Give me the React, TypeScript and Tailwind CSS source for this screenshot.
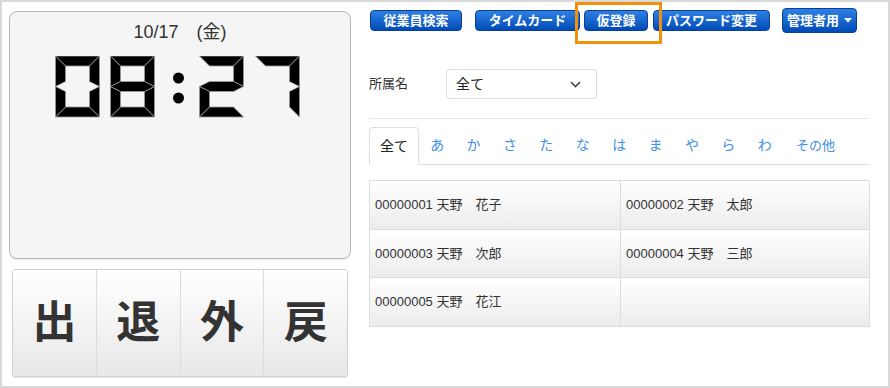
import React from 'react';

const FONT = { fontFamily: '"Liberation Sans", "Noto Sans CJK JP", sans-serif' };

// seven segment digit, W x H box
const W = 44;
const H = 61;
const T = 10;
const M = H / 2;

const SEGMENTS: Record<string, string> = {
  a: `0,0 ${W},0 ${W - T},${T} ${T},${T}`,
  b: `${W},0 ${W},${M} ${W - T},${M - T / 2} ${W - T},${T}`,
  c: `${W},${M} ${W},${H} ${W - T},${H - T} ${W - T},${M + T / 2}`,
  d: `0,${H} ${T},${H - T} ${W - T},${H - T} ${W},${H}`,
  e: `0,${M} ${T},${M + T / 2} ${T},${H - T} 0,${H}`,
  f: `0,0 ${T},${T} ${T},${M - T / 2} 0,${M}`,
  g: `0,${M} ${T},${M - T / 2} ${W - T},${M - T / 2} ${W},${M} ${W - T},${M + T / 2} ${T},${M + T / 2}`,
};

const DIGITS: Record<string, string> = {
  '0': 'abcdef',
  '2': 'abged',
  '7': 'abc',
  '8': 'abcdefg',
};

function Digit({ value, x }: { value: string; x: number }) {
  return (
    <g transform={`translate(${x} 0)`}>
      {DIGITS[value].split('').map((s) => (
        <polygon key={s} points={SEGMENTS[s]} fill="#000" stroke="#9a9a9a" strokeWidth={0.8} />
      ))}
    </g>
  );
}

function Clock() {
  return (
    <div className="w-[342px] h-[248px] rounded-lg border border-[#b8b8b8] bg-[#f5f5f5] flex flex-col items-center shadow-[0_1px_1px_rgba(0,0,0,0.08)]">
      <div className="mt-[9px] text-[18px] leading-[22px] text-[#333]">10/17　(金)</div>
      <svg width={246} height={62} viewBox="0 0 246 62" className="mt-[13px] ml-[-4px]">
        <Digit value="0" x={0.5} />
        <Digit value="8" x={55.5} />
        <circle cx={123.5} cy={22} r={5.5} fill="#000" />
        <circle cx={123.5} cy={42} r={5.5} fill="#000" />
        <Digit value="2" x={144.5} />
        <Digit value="7" x={200.5} />
      </svg>
    </div>
  );
}

const punch = ['出', '退', '外', '戻'];

function PunchButtons() {
  return (
    <div className="mt-[10px] mx-[3px] flex h-[108px] rounded-[3px] border border-[#d0d0d0] shadow-[0_1px_1px_rgba(0,0,0,0.1)] overflow-hidden">
      {punch.map((p, i) => (
        <div
          key={p}
          className={`flex-1 flex items-center justify-center bg-linear-to-b from-white to-[#e8e8e8] text-[44px] font-bold text-[#333] ${i > 0 ? 'border-l border-[#dcdcdc]' : ''}`}
        >
          {p}
        </div>
      ))}
    </div>
  );
}

const navButtons = [
  { label: '従業員検索', w: 'w-[92px]', ml: '' },
  { label: 'タイムカード', w: 'w-[105px]', ml: 'ml-[13px]' },
  { label: '仮登録', w: 'w-[64px]', ml: 'ml-[4px]' },
  { label: 'パスワード変更', w: 'w-[117px]', ml: 'ml-[5px]' },
];

const kana = ['あ', 'か', 'さ', 'た', 'な', 'は', 'ま', 'や', 'ら', 'わ'];

const employees = [
  '00000001 天野　花子',
  '00000002 天野　太郎',
  '00000003 天野　次郎',
  '00000004 天野　三郎',
  '00000005 天野　花江',
  '',
];

export default function App() {
  return (
    <div
      className="relative w-[890px] h-[388px] box-border border-2 border-[#d9d9d9] bg-white flex overflow-hidden"
      style={FONT}
    >
      {/* left: clock and punch buttons */}
      <div className="pl-[7px] pt-[9px] flex flex-col">
        <Clock />
        <PunchButtons />
      </div>

      {/* right: nav, filter, tabs, list */}
      <div className="ml-[18px] pt-[6px] w-[500px] flex flex-col">
        <div className="flex items-center h-[25px] ml-px">
          {navButtons.map((b) => (
            <div
              key={b.label}
              className={`${b.w} ${b.ml} h-[21px] rounded-[4px] border border-[#0b3f94] bg-linear-to-b from-[#2e80e4] to-[#004bb6] text-white text-[13px] font-bold flex items-center justify-center leading-none`}
            >
              {b.label}
            </div>
          ))}
          <div className="w-[75px] ml-[12px] h-[25px] rounded-[4px] border border-[#0b3f94] bg-linear-to-b from-[#2e80e4] to-[#004bb6] text-white text-[13px] font-bold flex items-center justify-center gap-[5px] leading-none">
            <span>管理者用</span>
            <svg width="8" height="5" viewBox="0 0 8 5">
              <path d="M0 0 L8 0 L4 4.5 Z" fill="#fff" />
            </svg>
          </div>
        </div>

        <div className="mt-[36px] flex items-center h-[30px]">
          <div className="w-[77px] text-[13px] text-[#333]">所属名</div>
          <div className="w-[151px] h-[30px] rounded-[4px] border border-[#dcdcdc] bg-white flex items-center justify-between pl-[9px] pr-[15px] text-[14px] text-[#222]">
            <span>全て</span>
            <svg width="11" height="7" viewBox="0 0 11 7">
              <path d="M1 1 L5.5 5.5 L10 1" fill="none" stroke="#444" strokeWidth="1.6" />
            </svg>
          </div>
        </div>

        <div className="mt-[19px] border-t border-[#e6e6e6]" />

        <div className="mt-[8px] flex border-b border-[#dedede] h-[38px]">
          <div className="w-[50px] h-[38px] -mb-px rounded-t-[4px] border border-[#dedede] border-b-white bg-white flex items-center justify-center text-[14px] text-[#222]">
            全て
          </div>
          {kana.map((k) => (
            <div key={k} className="w-[36.4px] flex items-center justify-center text-[14px] text-[#3f8fe6]">
              {k}
            </div>
          ))}
          <div className="pl-[13px] flex items-center text-[13px] text-[#3f8fe6]">その他</div>
        </div>

        <div className="mt-[15px] grid grid-cols-[251px_249px] border border-[#dcdcdc] border-r-0 border-b-0">
          {employees.map((e, i) => (
            <div
              key={i}
              className="h-[48.7px] border-r border-b border-[#dcdcdc] bg-linear-to-b from-white to-[#ececec] flex items-center pl-[5px] text-[13px] text-[#333]"
            >
              {e}
            </div>
          ))}
        </div>
      </div>

      {/* highlight box */}
      <div className="absolute left-[573px] top-0 w-[87px] h-[42px] border-[3px] border-[#f0900c]" />
    </div>
  );
}
